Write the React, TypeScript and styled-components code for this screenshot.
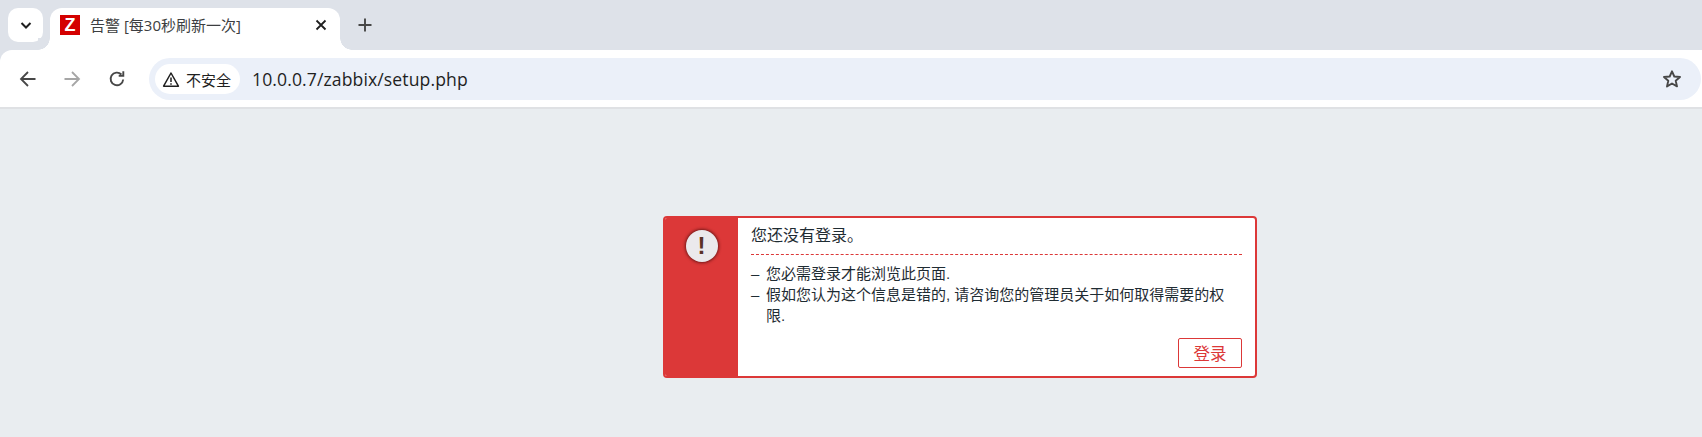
import React from "react";
import styled, { createGlobalStyle } from "styled-components";

const Global = createGlobalStyle`
  html, body { margin: 0; padding: 0; background: #e9edf0; }
  body { font-family: "Open Sans", "Noto Sans CJK SC", sans-serif; }
`;
const Page = styled.div`
  width: 1702px; height: 437px; display: flex; flex-direction: column; overflow: hidden;
`;
const TabStrip = styled.div`
  height: 50px; background: #dee2e9; display: flex; align-items: flex-start; padding: 8px 0 0 8px; box-sizing: border-box; flex: none;
`;
const TabMenu = styled.div`
  width: 35px; height: 34px; border-radius: 10px; background: #fff; display: flex; align-items: center; justify-content: center; flex: none; color: #1f1f1f;
`;
const Tab = styled.div`
  position: relative; width: 290px; height: 42px; margin-left: 7px; background: #fff; border-radius: 12px 12px 0 0;
  display: flex; align-items: flex-start; padding: 7px 0 0 10px; box-sizing: border-box; flex: none;
  &::before, &::after { content: ""; position: absolute; bottom: 0; width: 12px; height: 12px; background: radial-gradient(circle at var(--cx) 0, #dee2e9 11.5px, #fff 12px); }
  &::before { left: -12px; --cx: 0; }
  &::after { right: -12px; --cx: 100%; }
`;
const Favicon = styled.div`
  width: 20px; height: 20px; background: #d40000; color: #fff; font: 700 18px/20px "Liberation Sans", sans-serif; text-align: center; flex: none;
`;
const TabTitle = styled.div`
  margin-left: 10px; width: 223px; flex: none; font-size: 15px; line-height: 20px; color: #3c3e41; white-space: nowrap;
`;
const TabClose = styled.div`
  width: 16px; height: 20px; display: flex; align-items: center; justify-content: center; color: #1f1f1f;
`;
const NewTab = styled.div`
  width: 16px; height: 34px; margin-left: 17px; display: flex; align-items: center; justify-content: center; color: #474747; flex: none;
`;
const Toolbar = styled.div`
  height: 57px; background: #fff; border-radius: 12px 0 0 0; display: flex; align-items: flex-start; padding: 8px 0 0 0; box-sizing: border-box; flex: none;
`;
const ToolbarWrap = styled.div`
  background: #dee2e9; flex: none;
`;
const NavButton = styled.div<{ $x: number; $dim?: boolean }>`
  width: 24px; height: 42px; margin-left: ${(p) => p.$x}px; display: flex; align-items: center; justify-content: center; flex: none; color: ${(p) => (p.$dim ? "#a6a6a6" : "#474747")};
`;
const Omnibox = styled.div`
  margin-left: 20px; width: 1552px; height: 42px; border-radius: 21px; background: #ebf0f9; display: flex; align-items: center; padding: 0 19px 0 6px; box-sizing: border-box; flex: none;
`;
const Chip = styled.div`
  height: 30px; width: 85px; border-radius: 15px; background: #fff; display: flex; align-items: center; padding-left: 7px; box-sizing: border-box; gap: 6px; flex: none; font-size: 15px; color: #1f1f1f;
`;
const Url = styled.div`
  margin-left: 12px; flex: 1; font-size: 17.6px; color: #1f1f1f; white-space: nowrap; letter-spacing: 0.1px;
`;
const Divider = styled.div`
  height: 2px; background: #dfe1e4; flex: none;
`;
const Content = styled.div`
  flex: 1; background: #e9edf0; padding: 107px 0 0 663px; box-sizing: border-box;
`;
const MessageBox = styled.div`
  width: 594px; height: 162px; box-sizing: border-box; border: 2px solid #dc3838; border-radius: 4px; background: #fff; display: flex; overflow: hidden;
`;
const Side = styled.div`
  width: 73px; flex: none; background: #dc3838; display: flex; justify-content: center; align-items: flex-start; padding-top: 12px; box-sizing: border-box;
`;
const Bang = styled.div`
  width: 32px; height: 32px; border-radius: 50%; background: #ebe9ec; box-shadow: 0 0 3px 1px rgba(80, 15, 15, 0.75); color: #5b3226;
  font: 700 24px/32px "Liberation Sans", sans-serif; text-align: center;
`;
const Main = styled.div`
  flex: 1; padding: 0 13px 0 13px; display: flex; flex-direction: column; font-family: "Liberation Sans", "Noto Sans CJK SC", sans-serif; color: #1f2c33;
`;
const Heading = styled.div`
  height: 37px; box-sizing: border-box; padding-top: 6px; font-size: 16px; line-height: 24px; border-bottom: 1px dashed #dc3838;
`;
const List = styled.ul`
  list-style: none; margin: 8px 0 0; padding: 0; font-size: 15px; line-height: 21px;
`;
const Item = styled.li`
  position: relative; padding-left: 15px;
  &::before { content: "–"; position: absolute; left: 0; top: 0; }
`;
const Actions = styled.div`
  margin-top: auto; margin-bottom: 8px; display: flex; justify-content: flex-end;
`;
const Login = styled.button`
  width: 64px; height: 30px; box-sizing: border-box; border: 1px solid #dc3838; border-radius: 2px; background: #fff; color: #dc3838; font: 16.5px/1 "Noto Sans CJK SC", sans-serif; padding: 0;
`;

export default function App() {
  return (
    <Page>
      <Global />
      <TabStrip>
        <TabMenu>
          <svg width="14" height="14" viewBox="0 0 14 14" fill="none" stroke="currentColor" strokeWidth="2"><path d="M2.5 5l4.5 4.5L11.5 5" /></svg>
        </TabMenu>
        <Tab>
          <Favicon>Z</Favicon>
          <TabTitle>告警 [每30秒刷新一次]</TabTitle>
          <TabClose>
            <svg width="12" height="12" viewBox="0 0 12 12" fill="none" stroke="currentColor" strokeWidth="1.8"><path d="M1.5 1.5l9 9M10.5 1.5l-9 9" /></svg>
          </TabClose>
        </Tab>
        <NewTab>
          <svg width="14" height="14" viewBox="0 0 14 14" fill="none" stroke="currentColor" strokeWidth="1.9"><path d="M7 0.5v13M0.5 7h13" /></svg>
        </NewTab>
      </TabStrip>
      <ToolbarWrap>
        <Toolbar>
          <NavButton $x={16}>
            <svg width="18" height="18" viewBox="0 0 18 18" fill="none" stroke="currentColor" strokeWidth="1.8"><path d="M16.5 9H2M9 2L2 9l7 7" /></svg>
          </NavButton>
          <NavButton $x={20} $dim>
            <svg width="18" height="18" viewBox="0 0 18 18" fill="none" stroke="currentColor" strokeWidth="1.8"><path d="M1.5 9H16M9 2l7 7-7 7" /></svg>
          </NavButton>
          <NavButton $x={21}>
            <svg width="18" height="18" viewBox="0 0 18 18" fill="none" stroke="currentColor" strokeWidth="1.9"><path d="M15.2 9.5a6.3 6.3 0 1 1-1.8-5" /><path d="M15.3 1.2v4.6h-4.6" /></svg>
          </NavButton>
          <Omnibox>
            <Chip>
              <svg width="18" height="17" viewBox="0 0 18 17" fill="none" stroke="#1f1f1f" strokeWidth="1.5"><path d="M9 2L1.6 15.2h14.8z" strokeLinejoin="round" /><path d="M9 6.5v4.6M9 12.2v1.5" /></svg>
              不安全
            </Chip>
            <Url>10.0.0.7/zabbix/setup.php</Url>
            <svg width="20" height="20" viewBox="0 0 20 20" fill="none" stroke="#474747" strokeWidth="1.9" strokeLinejoin="round"><path d="M10 2.3l2.3 5.2 5.7.5-4.3 3.8 1.3 5.6L10 14.5l-5 2.9 1.3-5.6L2 8l5.7-.5z" /></svg>
          </Omnibox>
        </Toolbar>
      </ToolbarWrap>
      <Divider />
      <Content>
        <MessageBox>
          <Side><Bang>!</Bang></Side>
          <Main>
            <Heading>您还没有登录。</Heading>
            <List>
              <Item>您必需登录才能浏览此页面.</Item>
              <Item>假如您认为这个信息是错的, 请咨询您的管理员关于如何取得需要的权限.</Item>
            </List>
            <Actions><Login>登录</Login></Actions>
          </Main>
        </MessageBox>
      </Content>
    </Page>
  );
}
